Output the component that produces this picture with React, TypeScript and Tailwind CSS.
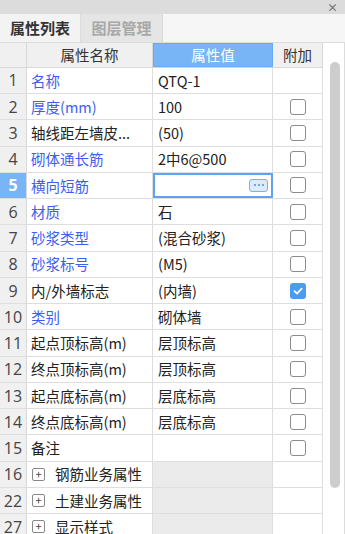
import React from "react";

type Row = {
  no: string;
  name: string;
  value?: string;
  blue?: boolean;
  check?: "none" | "off" | "on";
  group?: boolean;
  active?: boolean;
};

const rows: Row[] = [
  { no: "1", name: "名称", value: "QTQ-1", blue: true, check: "none" },
  { no: "2", name: "厚度(mm)", value: "100", blue: true, check: "off" },
  { no: "3", name: "轴线距左墙皮...", value: "(50)", check: "off" },
  { no: "4", name: "砌体通长筋", value: "2中6@500", blue: true, check: "off" },
  { no: "5", name: "横向短筋", value: "", blue: true, check: "off", active: true },
  { no: "6", name: "材质", value: "石", blue: true, check: "off" },
  { no: "7", name: "砂浆类型", value: "(混合砂浆)", blue: true, check: "off" },
  { no: "8", name: "砂浆标号", value: "(M5)", blue: true, check: "off" },
  { no: "9", name: "内/外墙标志", value: "(内墙)", check: "on" },
  { no: "10", name: "类别", value: "砌体墙", blue: true, check: "off" },
  { no: "11", name: "起点顶标高(m)", value: "层顶标高", check: "off" },
  { no: "12", name: "终点顶标高(m)", value: "层顶标高", check: "off" },
  { no: "13", name: "起点底标高(m)", value: "层底标高", check: "off" },
  { no: "14", name: "终点底标高(m)", value: "层底标高", check: "off" },
  { no: "15", name: "备注", value: "", check: "off" },
  { no: "16", name: "钢筋业务属性", group: true },
  { no: "22", name: "土建业务属性", group: true },
  { no: "27", name: "显示样式", group: true },
];

function CheckBox({ on }: { on?: boolean }) {
  if (on) {
    return (
      <div className="w-[16px] h-[16px] rounded-[3px] bg-[#4a9cf3] flex items-center justify-center">
        <svg width="12" height="12" viewBox="0 0 12 12">
          <path d="M2.5 6.2 L5 8.6 L9.6 3.6" stroke="white" strokeWidth="1.8" fill="none" strokeLinecap="round" strokeLinejoin="round" />
        </svg>
      </div>
    );
  }
  return <div className="w-[16px] h-[16px] rounded-[3px] border border-[#8c8c8c] bg-white" />;
}

export default function App() {
  return (
    <div
      className="w-[345px] h-[534px] overflow-hidden bg-[#f3f3f3] flex flex-col text-[14.5px] text-[#222]"
      style={{ fontFamily: '"Noto Sans CJK SC", "Noto Sans", sans-serif' }}
    >
      {/* title bar */}
      <div className="h-[14px] bg-[#dcdcdc] flex items-center justify-end pr-[7px] text-[#777] text-[11px] leading-none font-bold">
        ×
      </div>

      {/* tabs */}
      <div className="h-[29px] flex bg-[#f6f6f6] border-b border-[#dcdcdc]">
        <div className="w-[81px] flex items-center justify-center font-bold text-[15px] text-[#333] bg-[#f3f3f3] border-r border-[#dcdcdc]">
          属性列表
        </div>
        <div className="w-[82px] flex items-center justify-center font-bold text-[15px] text-[#a8a8a8] bg-[#e5e5e5] border-r border-[#d8d8d8]">
          图层管理
        </div>
      </div>

      <div className="flex flex-1 min-h-0">
        {/* table */}
        <div className="w-[323px] flex flex-col">
          <div className="grid grid-cols-[27px_126px_120px_50px] h-[26px] border-b border-[#d8d8d8]">
            <div className="bg-[#f0f0f0] border-r border-[#d8d8d8]" />
            <div className="bg-[#f0f0f0] border-r border-[#d8d8d8] flex items-center justify-center text-[#333]">属性名称</div>
            <div className="bg-[#77b5f7] border border-[#68a9f2] flex items-center justify-center text-white">属性值</div>
            <div className="bg-[#f0f0f0] border-r border-[#d8d8d8] flex items-center justify-center text-[#333]">附加</div>
          </div>
          {rows.map((r) => (
            <div key={r.no} className="grid grid-cols-[27px_126px_120px_50px] h-[26.27px] shrink-0 border-b border-[#dedede]">
              <div
                className={
                  r.active
                    ? "bg-[#77b5f7] text-white text-[16px] font-bold border-r border-[#d8d8d8] flex items-center justify-center"
                    : "bg-[#f0f0f0] text-[#444] text-[16px] border-r border-[#d8d8d8] flex items-center justify-center"
                }
                style={{ fontFamily: '"Open Sans", "Noto Sans", sans-serif' }}
              >
                {r.no}
              </div>
              <div className="bg-white border-r border-[#dedede] flex items-center pl-[4px] whitespace-nowrap overflow-hidden">
                {r.group ? (
                  <>
                    <span className="w-[13px] h-[13px] border border-[#888] rounded-[2px] flex items-center justify-center text-[11px] leading-none text-[#444] mr-[10px] ml-[1px]">
                      +
                    </span>
                    <span className="text-[#222]">{r.name}</span>
                  </>
                ) : (
                  <span className={r.blue ? "text-[#3d5ef0]" : "text-[#222]"}>{r.name}</span>
                )}
              </div>
              {r.group ? (
                <div className="bg-[#ebebeb] border-r border-[#dedede]" />
              ) : r.active ? (
                <div className="bg-white border-2 border-[#5ea3ef] flex items-center justify-end pr-[3px]">
                  <div className="w-[19px] h-[13px] rounded-[3px] border border-[#7ab2ee] bg-[#dcebfb] flex items-center justify-center gap-[2px]">
                    <span className="w-[2px] h-[2px] bg-[#4d8fe0] rounded-full" />
                    <span className="w-[2px] h-[2px] bg-[#4d8fe0] rounded-full" />
                    <span className="w-[2px] h-[2px] bg-[#4d8fe0] rounded-full" />
                  </div>
                </div>
              ) : (
                <div className="bg-white border-r border-[#dedede] flex items-center pl-[5px] text-[#222] whitespace-nowrap">
                  {r.value}
                </div>
              )}
              <div className="bg-white border-r border-[#dedede] flex items-center justify-center">
                {r.check === "off" && <CheckBox />}
                {r.check === "on" && <CheckBox on />}
              </div>
            </div>
          ))}
        </div>

        {/* scrollbar */}
        <div className="flex-1 bg-white border-r border-[#dcdcdc] pt-[19px] pl-[7px]">
          <div className="w-[10px] h-[426px] rounded-full bg-[#cdcdcd]" />
        </div>
      </div>
    </div>
  );
}
